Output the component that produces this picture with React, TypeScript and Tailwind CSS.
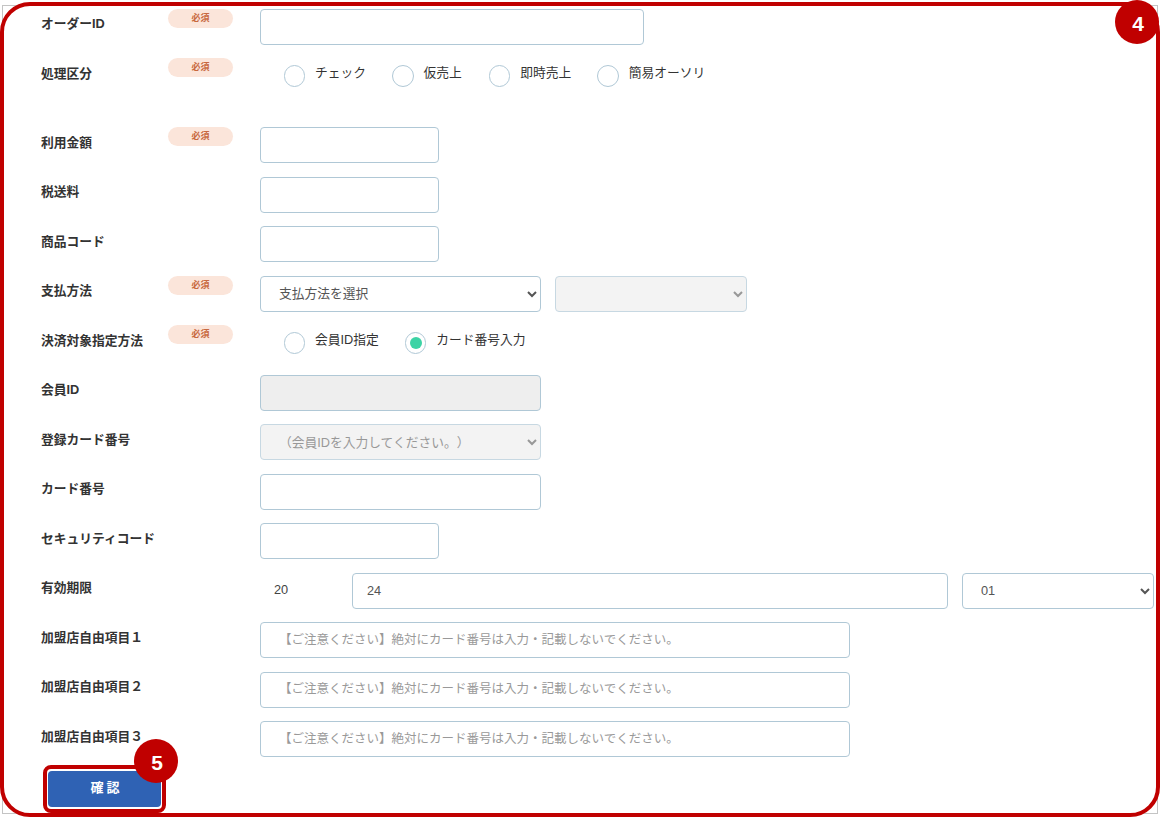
const labelClass = "w-[127px] shrink-0 pt-[6.5px] text-[12.75px] leading-[18px] font-bold text-[#333]";
const fieldClass = "h-9 rounded border border-[#b0c8d6] outline-none";
const inputClass = fieldClass + " bg-white px-[18px] text-[12.75px] text-[#555]";
const noteClass = fieldClass + " w-[590px] bg-white px-[18px] pb-[1px] text-[12.5px] text-[#555] placeholder:text-[#999]";
const selectClass = fieldClass + " bg-white pl-[14px] pr-1 text-[12.75px] text-[#555]";
const disabledSelectClass = fieldClass + " bg-[#eeeeee] pl-[14px] pr-1 text-[12.75px] text-[#6d6d6d] opacity-70";
const NOTE = "【ご注意ください】絶対にカード番号は入力・記載しないでください。";

function Required() {
  return (
    <span className="flex h-[19px] w-[65px] items-center justify-center rounded-full bg-[#fbe5da] pt-[1px] text-[9px] font-bold text-[#c8693f]">
      必須
    </span>
  );
}

function Row({ label, required, tall, children }: { label: string; required?: boolean; tall?: boolean; children?: React.ReactNode }) {
  return (
    <div className={tall ? "flex h-[69px] items-start" : "flex h-[49.5px] items-start"}>
      <div className={labelClass}>{label}</div>
      <div className="w-[92px] shrink-0">{required && <Required />}</div>
      {children}
    </div>
  );
}

function Radio({ label, checked, className }: { label: string; checked?: boolean; className: string }) {
  return (
    <label className={"flex items-start " + className}>
      <span className="mt-[7px] flex h-[21.5px] w-[21.5px] items-center justify-center rounded-full border border-[#b0c8d6] bg-white">
        {checked && <span className="h-[12px] w-[12px] rounded-full bg-[#3cd3a5]" />}
      </span>
      <span className="ml-[10px] pt-[6px] text-[12.75px] leading-[18px] text-[#333]">{label}</span>
    </label>
  );
}

function Marker({ n, className }: { n: number; className: string }) {
  return (
    <div className={"absolute flex h-[44px] w-[44px] items-center justify-center rounded-full bg-[#c00000] pl-[2px] pt-[3px] text-[21px] font-bold text-white " + className}>
      {n}
    </div>
  );
}

export default function App() {
  return (
    <div className="relative h-[817px] w-[1160px] overflow-hidden bg-white font-['Liberation_Sans','Noto_Sans_CJK_JP',sans-serif] [text-spacing-trim:space-all]">
      <div className="pl-[41px] pr-[6px] pt-[8.5px]">
        <Row label="オーダーID" required>
          <input className={inputClass + " w-[384px]"} />
        </Row>
        <Row label="処理区分" required tall>
          <div className="flex">
            <Radio label="チェック" className="ml-[23.5px]" />
            <Radio label="仮売上" className="ml-[26px]" />
            <Radio label="即時売上" className="ml-[27px]" />
            <Radio label="簡易オーソリ" className="ml-[26px]" />
          </div>
        </Row>
        <Row label="利用金額" required>
          <input className={inputClass + " w-[179px]"} />
        </Row>
        <Row label="税送料">
          <input className={inputClass + " w-[179px]"} />
        </Row>
        <Row label="商品コード">
          <input className={inputClass + " w-[179px]"} />
        </Row>
        <Row label="支払方法" required>
          <div className="flex gap-[14px]">
            <select className={selectClass + " w-[281px]"}>
              <option>支払方法を選択</option>
            </select>
            <select disabled className={disabledSelectClass + " w-[192px]"}>
              <option></option>
            </select>
          </div>
        </Row>
        <Row label="決済対象指定方法" required>
          <div className="flex">
            <Radio label="会員ID指定" className="ml-[23.5px]" />
            <Radio label="カード番号入力" checked className="ml-[26px]" />
          </div>
        </Row>
        <Row label="会員ID">
          <input disabled className={fieldClass + " w-[281px] bg-[#eeeeee] px-[18px]"} />
        </Row>
        <Row label="登録カード番号">
          <select disabled className={disabledSelectClass + " w-[281px]"}>
            <option>（会員IDを入力してください。）</option>
          </select>
        </Row>
        <Row label="カード番号">
          <input className={inputClass + " w-[281px]"} />
        </Row>
        <Row label="セキュリティコード">
          <input className={inputClass + " w-[179px]"} />
        </Row>
        <Row label="有効期限">
          <div className="flex items-start">
            <span className="w-[92px] pl-[14px] pt-[8px] text-[12.75px] leading-[18px] text-[#444]">20</span>
            <input defaultValue="24" className={fieldClass + " mr-[14px] w-[596px] bg-white px-[14px] text-[12.75px] text-[#555]"} />
            <select className={selectClass + " w-[192px]"}>
              <option>01</option>
            </select>
          </div>
        </Row>
        <Row label="加盟店自由項目１">
          <input placeholder={NOTE} className={noteClass} />
        </Row>
        <Row label="加盟店自由項目２">
          <input placeholder={NOTE} className={noteClass} />
        </Row>
        <Row label="加盟店自由項目３">
          <input placeholder={NOTE} className={noteClass} />
        </Row>
        <button className="ml-[7px] mt-[0.5px] h-9 w-[113px] rounded bg-[#2f62b4] pb-[2px] pl-[4px] text-[13px] font-bold tracking-[3px] text-white">
          確認
        </button>
      </div>

      {/* annotation overlays */}
      <div className="pointer-events-none absolute left-[2px] top-[5px] h-[809px] w-[1156px] border border-[#c4c4c4]" />
      <div className="pointer-events-none absolute left-0 top-[2px] h-[815px] w-[1160px] rounded-[30px] border-4 border-[#c00000]" />
      <div className="pointer-events-none absolute left-[43px] top-[765px] h-[48px] w-[123px] rounded-lg border-4 border-[#c00000]" />
      <Marker n={4} className="left-[1115px] top-0" />
      <Marker n={5} className="left-[134px] top-[739px]" />
    </div>
  );
}
